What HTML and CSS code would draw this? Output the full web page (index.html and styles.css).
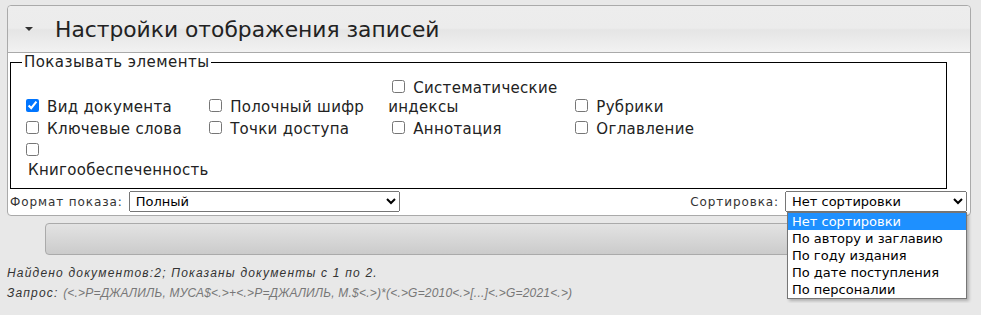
FILE: index.html
```html
<!DOCTYPE html>
<html lang="ru">
<head>
    <meta charset="utf-8">
    <title>Настройки отображения записей</title>
    <link rel="stylesheet" href="styles.css">
</head>
<body>
    <section class="settings">
        <div class="settings__header">
            <span class="settings__arrow"></span>
            <span class="settings__title">Настройки отображения записей</span>
        </div>

        <div class="settings__body">
            <fieldset class="settings__elements">
                <legend class="settings__legend">Показывать элементы</legend>
                <div class="settings__row">
                    <label class="settings__item"><input type="checkbox" checked> Вид документа</label>
                    <label class="settings__item"><input type="checkbox"> Полочный шифр</label>
                    <label class="settings__item"><input type="checkbox"> Систематические индексы</label>
                    <label class="settings__item"><input type="checkbox"> Рубрики</label>
                </div>
                <div class="settings__row">
                    <label class="settings__item"><input type="checkbox"> Ключевые слова</label>
                    <label class="settings__item"><input type="checkbox"> Точки доступа</label>
                    <label class="settings__item"><input type="checkbox"> Аннотация</label>
                    <label class="settings__item"><input type="checkbox"> Оглавление</label>
                </div>
                <div class="settings__row">
                    <label class="settings__item settings__item--wrapped"><input type="checkbox"> Книгообеспеченность</label>
                </div>
            </fieldset>

            <div class="settings__controls">
                <div class="settings__control">
                    <span class="settings__label">Формат показа:</span>
                    <select class="settings__select settings__select--format">
                        <option>Полный</option>
                    </select>
                </div>
                <div class="settings__control settings__control--sort">
                    <span class="settings__label">Сортировка:</span>
                    <select class="settings__select settings__select--sort">
                        <option>Нет сортировки</option>
                    </select>
                    <ul class="settings__dropdown">
                        <li class="settings__option settings__option--active">Нет сортировки</li>
                        <li class="settings__option">По автору и заглавию</li>
                        <li class="settings__option">По году издания</li>
                        <li class="settings__option">По дате поступления</li>
                        <li class="settings__option">По персоналии</li>
                    </ul>
                </div>
            </div>
        </div>
    </section>

    <button class="apply-button" type="button"></button>

    <div class="results">
        <div class="results__found">Найдено документов:2; Показаны документы с 1 по 2.</div>
        <div class="results__query">Запрос: <span class="results__query-text">(&lt;.&gt;P=ДЖАЛИЛЬ, МУСА$&lt;.&gt;+&lt;.&gt;P=ДЖАЛИЛЬ, М.$&lt;.&gt;)*(&lt;.&gt;G=2010&lt;.&gt;[...]&lt;.&gt;G=2021&lt;.&gt;)</span></div>
    </div>
</body>
</html>
```

FILE: styles.css
```css
body {
    margin: 0;
    padding: 5px 10px 0 7px;
    background-color: #e8e8e8;
    font-family: "DejaVu Sans", Verdana, sans-serif;
    color: #222;
}

.settings {
    border: 1px solid #aaa;
    border-radius: 4px;
    background-color: #fff;
}
.settings__header {
    display: flex;
    align-items: center;
    height: 46px;
    padding-left: 17px;
    border-bottom: 1px solid #aaa;
    border-radius: 4px 4px 0 0;
    background: linear-gradient(#ededed 0%, #ececec 48%, #e5e5e5 52%, #f2f2f2 100%);
}
.settings__arrow {
    width: 0;
    height: 0;
    border-left: 4px solid transparent;
    border-right: 4px solid transparent;
    border-top: 4px solid #333;
}
.settings__title {
    margin-left: 22px;
    font-size: 21.8px;
    color: #222;
}

.settings__body {
    padding: 0 3px 3px 0;
}
.settings__elements {
    width: 912px;
    margin: 0 2px;
    padding: 5px 12px 8px 11px;
    border: 1px solid #000;
}
.settings__legend {
    padding: 0 2px;
    font-size: 15px;
    letter-spacing: 0.45px;
}
.settings__item {
    display: inline-block;
    width: 178px;
    font-size: 15px;
    line-height: 19px;
    letter-spacing: 0.3px;
}
.settings__item input {
    margin: 4px 3px 2px 4px;
}
.settings__item--wrapped {
    padding-left: 6px;
    width: 172px;
}
.settings__item--wrapped input {
    margin-left: -2px;
}

.settings__controls {
    display: flex;
    justify-content: space-between;
    align-items: center;
    margin-top: 2px;
    padding-left: 2px;
}
.settings__control {
    display: flex;
    align-items: center;
}
.settings__control--sort {
    position: relative;
}
.settings__label {
    margin-right: 6px;
    font-size: 12px;
    letter-spacing: 0.9px;
    color: #333;
}
.settings__select {
    height: 21px;
    padding: 0 2px;
    font-family: "DejaVu Sans", Verdana, sans-serif;
    font-size: 13px;
    color: #000;
}
.settings__select--format {
    width: 271px;
}
.settings__select--sort {
    width: 182px;
}

.settings__dropdown {
    position: absolute;
    top: 100%;
    right: 0;
    width: 178px;
    margin: 0;
    padding: 0;
    list-style: none;
    background-color: #fff;
    border: 1px solid #767676;
    box-shadow: 2px 2px 3px rgba(0, 0, 0, 0.25);
    z-index: 10;
}
.settings__option {
    height: 17px;
    padding-left: 4px;
    font-size: 13px;
    line-height: 17px;
    color: #000;
}
.settings__option--active {
    background-color: #1e90ff;
    color: #fff;
}

.apply-button {
    display: block;
    width: 891px;
    height: 32px;
    margin: 7px 0 0 38px;
    border: 1px solid #aaa;
    border-radius: 4px;
    background: linear-gradient(#e3e3e3, #cbcbcb);
}

.results {
    margin-top: 8px;
    font-family: "Liberation Sans", Arial, sans-serif;
    font-size: 12px;
    font-style: italic;
    color: #333;
}
.results__found,
.results__query {
    height: 20px;
    line-height: 20px;
    letter-spacing: 1.2px;
}
.results__query-text {
    letter-spacing: 0.2px;
    color: #777;
}
```
